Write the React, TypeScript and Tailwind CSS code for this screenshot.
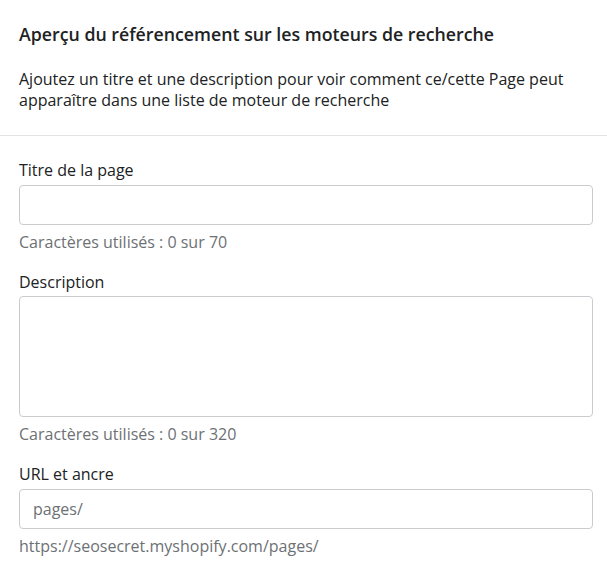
export default function App() {
  return (
    <div className="w-[607px] bg-white text-[#202223] font-['Open_Sans',sans-serif]">
      {/* Header */}
      <div className="px-[19px] pt-[23px] pb-[24px]">
        <h2 className="text-[17.75px] leading-[22px] font-semibold">
          Aperçu du référencement sur les moteurs de recherche
        </h2>
        <p className="mt-6 text-[16px] leading-[21px]">
          Ajoutez un titre et une description pour voir comment ce/cette Page peut apparaître dans une liste de moteur
          de recherche
        </p>
      </div>

      <div className="border-t border-[#e1e3e5]" />

      {/* Fields */}
      <div className="pl-[19px] pr-[14px] pt-[23px] pb-4 flex flex-col gap-[18px] text-[16px] leading-[22px]">
        <div>
          <label className="block mb-1">Titre de la page</label>
          <input
            type="text"
            className="block w-full h-10 px-3 rounded-[4px] border border-[#c9cccf] outline-none"
          />
          <p className="mt-1.5 text-[#6d7175]">Caractères utilisés : 0 sur 70</p>
        </div>
        <div>
          <label className="block mb-[3px]">Description</label>
          <textarea className="block w-full h-[121px] px-3 py-2 rounded-[4px] border border-[#c9cccf] outline-none resize-none" />
          <p className="mt-1.5 text-[#6d7175]">Caractères utilisés : 0 sur 320</p>
        </div>
        <div>
          <label className="block mb-1">URL et ancre</label>
          <div className="flex items-center h-10 px-[13px] rounded-[4px] border border-[#c9cccf] text-[#6d7175]">
            pages/
          </div>
          <p className="mt-1.5 text-[#6d7175]">https://seosecret.myshopify.com/pages/</p>
        </div>
      </div>
    </div>
  )
}
